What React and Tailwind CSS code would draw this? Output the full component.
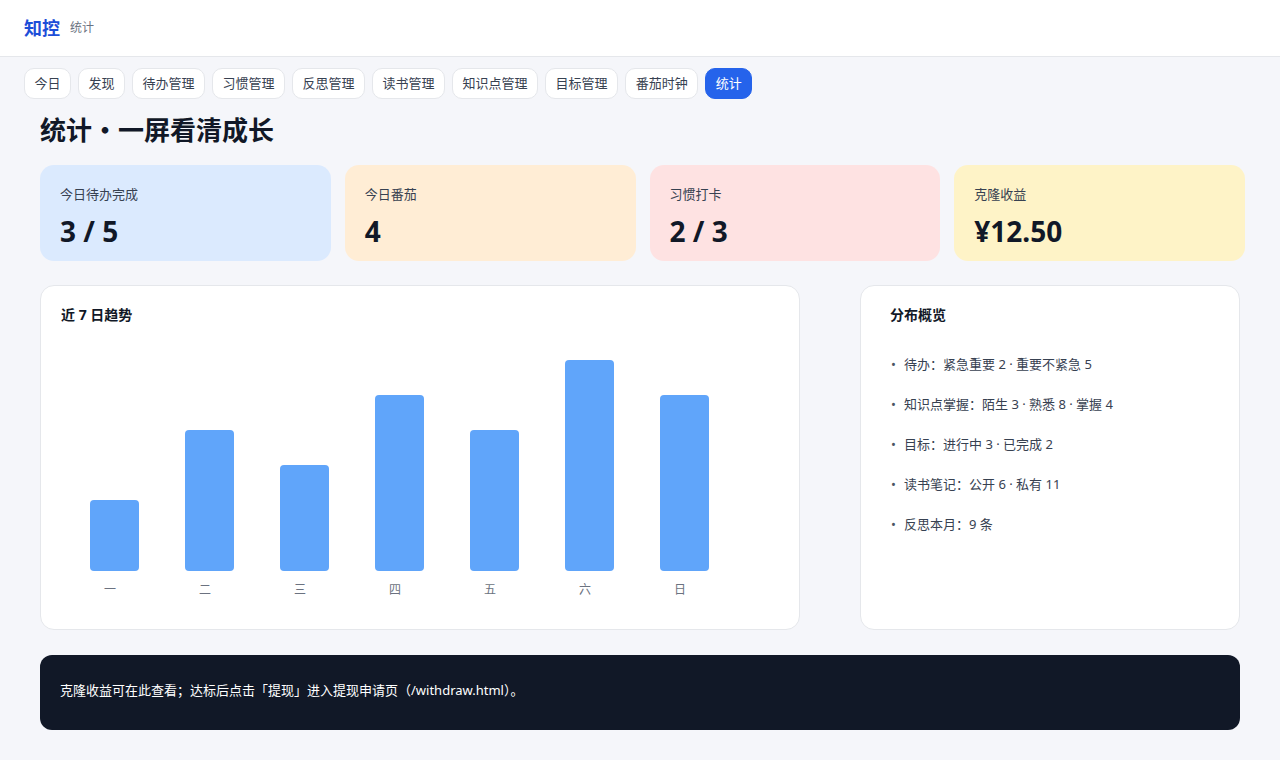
import React from "react";

const tabs = ["今日", "发现", "待办管理", "习惯管理", "反思管理", "读书管理", "知识点管理", "目标管理", "番茄时钟", "统计"];

const stats = [
  { label: "今日待办完成", value: "3 / 5", bg: "bg-[#dbeafe]" },
  { label: "今日番茄", value: "4", bg: "bg-[#ffedd5]" },
  { label: "习惯打卡", value: "2 / 3", bg: "bg-[#fee2e2]" },
  { label: "克隆收益", value: "¥12.50", bg: "bg-[#fef3c7]" },
];

const bars = [
  { d: "一", h: 71 },
  { d: "二", h: 141 },
  { d: "三", h: 106 },
  { d: "四", h: 176 },
  { d: "五", h: 141 },
  { d: "六", h: 211 },
  { d: "日", h: 176 },
];

const dist = [
  "待办：紧急重要 2 · 重要不紧急 5",
  "知识点掌握：陌生 3 · 熟悉 8 · 掌握 4",
  "目标：进行中 3 · 已完成 2",
  "读书笔记：公开 6 · 私有 11",
  "反思本月：9 条",
];

export default function App() {
  return (
    <div
      className="min-h-[760px] bg-[#f5f6fa] text-[#111827]"
      style={{ fontFamily: '"Noto Sans", "Noto Sans CJK SC", sans-serif' }}
    >
      <header className="h-[57px] bg-white border-b border-[#e5e7eb] flex items-center px-6 gap-[10px]">
        <span className="text-[18px] font-bold text-[#1d4ed8] leading-none">知控</span>
        <span className="text-[12px] text-[#6b7280] leading-none">统计</span>
      </header>

      <nav className="flex gap-[7px] px-6 mt-[11px]">
        {tabs.map((t) => (
          <button
            key={t}
            className={
              t === "统计"
                ? "h-[31px] px-[9.5px] rounded-[10px] border border-[#2563eb] bg-[#2563eb] text-white text-[13px] leading-none"
                : "h-[31px] px-[9.5px] rounded-[10px] border border-[#e5e7eb] bg-white text-[#374151] text-[13px] leading-none"
            }
          >
            {t}
          </button>
        ))}
      </nav>

      <main className="px-10">
        <h1 className="mt-[14px] text-[26px] leading-[34px] font-bold text-[#111827]">统计・一屏看清成长</h1>

        <div className="mt-[18px] grid grid-cols-4 gap-[14px] w-[1205px]">
          {stats.map((s) => (
            <div key={s.label} className={`${s.bg} rounded-[14px] pl-5 pt-[19px] pb-[13px]`}>
              <div className="text-[13px] leading-5 text-[#374151]">{s.label}</div>
              <div className="mt-[11px] text-[28px] leading-[33px] font-bold text-[#111827]">{s.value}</div>
            </div>
          ))}
        </div>

        <div className="mt-[24px] grid grid-cols-[760px_380px] gap-[60px]">
          <section className="h-[345px] bg-white border border-[#e5e7eb] rounded-[14px] px-5 pt-[19px]">
            <h2 className="text-[14px] leading-5 font-bold text-[#111827]">近 7 日趋势</h2>
            <div className="mt-[4px] h-[270px] flex items-end gap-[46px] pl-[29px]">
              {bars.map((b) => (
                <div key={b.d} className="w-[49px] flex flex-col items-center">
                  <div className="w-[49px] bg-[#60a5fa] rounded-[4px]" style={{ height: b.h }} />
                  <div className="mt-[10px] mr-[9px] text-[12px] leading-[18px] text-[#6b7280]">{b.d}</div>
                </div>
              ))}
            </div>
          </section>

          <section className="h-[345px] bg-white border border-[#e5e7eb] rounded-[14px] px-[29px] pt-[19px]">
            <h2 className="text-[14px] leading-5 font-bold text-[#111827]">分布概览</h2>
            <ul className="mt-[29px] flex flex-col gap-5">
              {dist.map((d) => (
                <li key={d} className="flex items-center text-[13px] leading-5 text-[#374151]">
                  <span className="w-[14px] pl-[1px] text-[#4b5563]">•</span>
                  <span>{d}</span>
                </li>
              ))}
            </ul>
          </section>
        </div>

        <div className="mt-[25px] w-[1200px] bg-[#111827] rounded-[12px] px-5 pt-[25px] pb-[30px] text-[13px] leading-5 text-white">
          克隆收益可在此查看；达标后点击「提现」进入提现申请页（/withdraw.html）。
        </div>
      </main>
    </div>
  );
}
